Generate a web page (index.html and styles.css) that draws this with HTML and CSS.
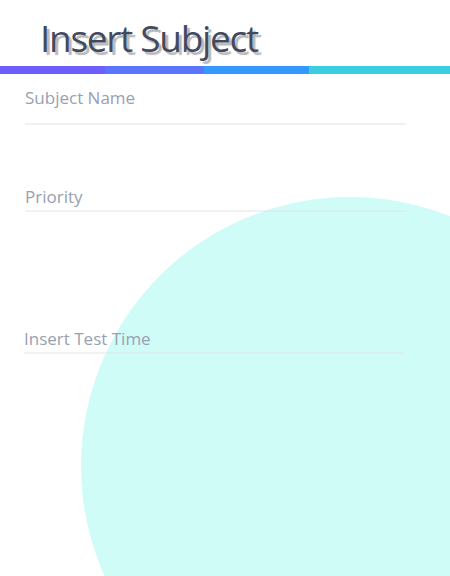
FILE: index.html
```html
<!DOCTYPE html>
<html>
<head>
<meta charset="utf-8">
<link rel="stylesheet" href="styles.css">
</head>
<body>
<div class="page">
  <div class="blob"></div>
  <h1 class="title">Insert Subject</h1>
  <div class="bar">
    <span class="seg s1"></span><span class="seg s2"></span><span class="seg s3"></span><span class="seg s4"></span>
  </div>
  <form class="form">
    <div class="field f1"><span class="label">Subject Name</span></div>
    <div class="field f2"><span class="label">Priority</span></div>
    <div class="field f3"><span class="label">Insert Test Time</span></div>
  </form>
</div>
</body>
</html>
```
FILE: styles.css
```css
html, body {
  margin: 0;
  padding: 0;
  background: #ffffff;
}
.page {
  position: relative;
  width: 450px;
  height: 576px;
  overflow: hidden;
  font-family: "Open Sans", "Noto Sans", sans-serif;
}
.blob {
  position: absolute;
  left: 81px;
  top: 197px;
  width: 538px;
  height: 538px;
  border-radius: 50%;
  background: #d0fcf8;
  z-index: 0;
}
.title {
  position: relative;
  margin: 0;
  padding: 14px 0 0 40px;
  height: 52px;
  font-size: 37px;
  font-weight: 400;
  line-height: 48px;
  letter-spacing: -1.3px;
  color: #434a60;
  text-shadow: 3px 3px 1px #b8b8b8;
}
.bar {
  display: flex;
  height: 8px;
}
.seg { display: block; height: 100%; }
.s1 { width: 105px; background: #6c5ffc; }
.s2 { width: 99px; background: #5a74fc; }
.s3 { width: 105px; background: #3399fc; }
.s4 { flex: 1; background: #3bcde0; }
.form {
  position: relative;
  z-index: 1;
  padding-left: 25px;
}
.field {
  width: 381px;
  border-bottom: 2px solid rgba(225, 228, 232, 0.5);
}
.label {
  display: block;
  font-size: 17px;
  line-height: 22px;
  color: #99a0b0;
}
.f1 { margin-top: 13px; padding-bottom: 14px; }
.f2 { margin-top: 61px; padding-bottom: 2px; }
.f3 { margin-top: 116px; margin-left: -1px; padding-bottom: 2px; }
```
